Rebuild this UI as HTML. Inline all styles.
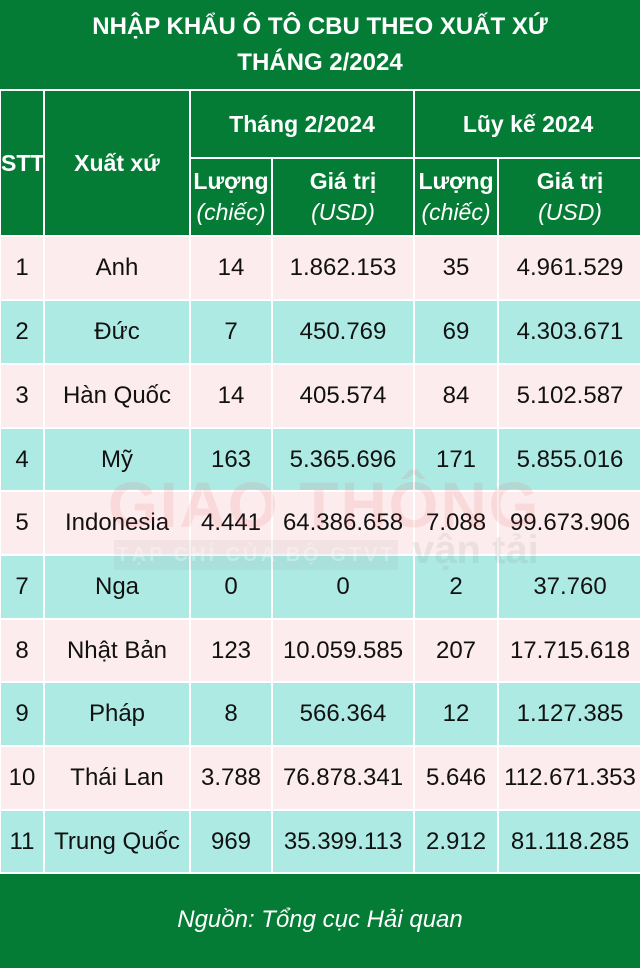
<!DOCTYPE html>
<html><head><meta charset="utf-8"><style>
*{margin:0;padding:0;box-sizing:border-box}
body{width:640px;height:968px;background:#047c35;font-family:"Liberation Sans",sans-serif;position:relative;overflow:hidden}
.title{position:absolute;top:0;left:0;width:640px;height:90px;color:#fff;font-weight:bold;font-size:24px;text-align:center;line-height:36px;padding-top:9px}
table{position:absolute;top:89px;left:-1px;width:642px;border-collapse:collapse;table-layout:fixed}
td{border:2px solid #fff;text-align:center;font-size:24px;color:#111;padding:0;white-space:nowrap;overflow:visible}
th{border:2px solid #fff;color:#fff;font-size:23px;font-weight:bold;background:#047c35;padding:0;line-height:31px;white-space:nowrap}
th i{font-weight:normal;font-style:italic}
tr.p td{background:#fdeced}
tr.c td{background:#aeeae4}
.foot{position:absolute;top:872px;left:0;width:640px;height:96px;color:#fff;font-style:italic;font-size:24px;text-align:center;line-height:96px}
.wm{position:absolute;left:108px;top:468px;font-weight:bold;font-size:64px;color:rgba(220,80,80,0.12);letter-spacing:2px;pointer-events:none}
.wm2{position:absolute;left:114px;top:540px;width:284px;height:30px;background:rgba(120,120,120,0.08);color:rgba(255,255,255,0.3);font-weight:bold;font-size:20px;line-height:30px;text-align:center;letter-spacing:3px}
.wm3{position:absolute;left:412px;top:528px;font-weight:bold;font-size:40px;color:rgba(120,120,120,0.12)}
</style></head><body>
<div class="title">NHẬP KHẨU Ô TÔ CBU THEO XUẤT XỨ<br>THÁNG 2/2024</div>
<table>
<colgroup><col style="width:44px"><col style="width:146px"><col style="width:82px"><col style="width:142px"><col style="width:84px"><col style="width:144px"></colgroup>
<tr style="height:68px"><th rowspan="2">STT</th><th rowspan="2">Xuất xứ</th><th colspan="2">Tháng 2/2024</th><th colspan="2">Lũy kế 2024</th></tr>
<tr style="height:78px"><th>Lượng<br><i>(chiếc)</i></th><th>Giá trị<br><i>(USD)</i></th><th>Lượng<br><i>(chiếc)</i></th><th>Giá trị<br><i>(USD)</i></th></tr>
<tr class="p" style="height:64px"><td>1</td><td>Anh</td><td>14</td><td>1.862.153</td><td>35</td><td>4.961.529</td></tr>
<tr class="c" style="height:64px"><td>2</td><td>Đức</td><td>7</td><td>450.769</td><td>69</td><td>4.303.671</td></tr>
<tr class="p" style="height:64px"><td>3</td><td>Hàn Quốc</td><td>14</td><td>405.574</td><td>84</td><td>5.102.587</td></tr>
<tr class="c" style="height:63px"><td>4</td><td>Mỹ</td><td>163</td><td>5.365.696</td><td>171</td><td>5.855.016</td></tr>
<tr class="p" style="height:64px"><td>5</td><td>Indonesia</td><td>4.441</td><td>64.386.658</td><td>7.088</td><td>99.673.906</td></tr>
<tr class="c" style="height:64px"><td>7</td><td>Nga</td><td>0</td><td>0</td><td>2</td><td>37.760</td></tr>
<tr class="p" style="height:63px"><td>8</td><td>Nhật Bản</td><td>123</td><td>10.059.585</td><td>207</td><td>17.715.618</td></tr>
<tr class="c" style="height:64px"><td>9</td><td>Pháp</td><td>8</td><td>566.364</td><td>12</td><td>1.127.385</td></tr>
<tr class="p" style="height:64px"><td>10</td><td>Thái Lan</td><td>3.788</td><td>76.878.341</td><td>5.646</td><td>112.671.353</td></tr>
<tr class="c" style="height:63px"><td>11</td><td>Trung Quốc</td><td>969</td><td>35.399.113</td><td>2.912</td><td>81.118.285</td></tr>
</table>
<div class="wm">GIAO THÔNG</div>
<div class="wm2">TẠP CHÍ CỦA BỘ GTVT</div>
<div class="wm3">vận tải</div>
<div class="foot">Nguồn: Tổng cục Hải quan</div>
</body></html>
